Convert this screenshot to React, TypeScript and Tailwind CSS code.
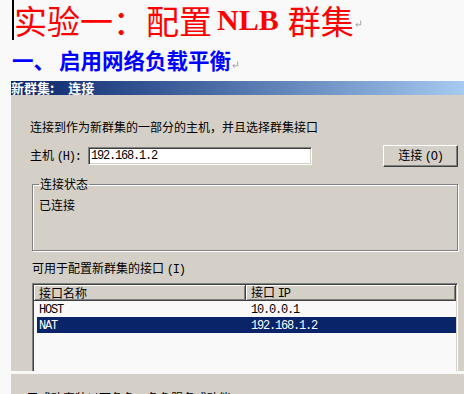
import type { ReactNode } from 'react';

const cjk = "font-['Noto_Sans_CJK_SC',sans-serif]";

function Lat({ children }: { children: ReactNode }) {
    return <span className="font-['Liberation_Mono',monospace] text-[12px] tracking-[-1.2px]">{children}</span>;
}

function ParaMark({ className }: { className: string }) {
    return (
        <svg viewBox="0 0 8 8" className={className} fill="none" stroke="#9a9a9a" strokeWidth="1">
            <path d="M6.5 0.5v5h-5.5M3 3.5l-2 2 2 2" />
        </svg>
    );
}

export default function App() {
    return (
        <div className={`h-[394px] w-[464px] overflow-hidden bg-[#f9f9f9] ${cjk}`}>
            {/* heading */}
            <div className="flex h-[40px] items-center pl-[12px]">
                <div className="h-[40px] w-[2px] self-start bg-black" />
                <div className="flex items-center text-[33px] leading-[40px] text-[#ff0000]">
                    <span>实验一：配置</span>
                    <span className="ml-[5px] mr-[9px] font-['Liberation_Serif',serif] text-[30px] font-bold">NLB</span>
                    <span>群集</span>
                </div>
                <ParaMark className="ml-[1px] mt-[6px] h-[7px] w-[7px]" />
            </div>

            <div className="mt-[4px] flex h-[32px] items-center pl-[12px] text-[21.5px] font-bold text-[#0000ff]">
                <span>一、</span>
                <span className="ml-[4px]">启用网络负载平衡</span>
                <ParaMark className="ml-[1px] mt-[8px] h-[7px] w-[7px]" />
            </div>

            {/* dialog */}
            <div className="ml-[11px] mt-[5px] text-[12px] leading-[16px] text-black">
                <div className="flex h-[14px] items-center bg-gradient-to-r from-[#0a246a] to-[#a6caf0] pr-[2px] text-[13px] font-bold text-white">
                    <span>新群集:</span>
                    <span className="ml-[14px]">连接</span>
                </div>
                <div className="h-[276px] overflow-hidden bg-[#d4d0c8] pl-[19px] pr-[6px]">
                    <div className="mt-[24px]">连接到作为新群集的一部分的主机，并且选择群集接口</div>

                    <div className="mt-[10px] flex h-[22px] items-center">
                        <span className="w-[58px]">
                            主机 <Lat>(H):</Lat>
                        </span>
                        <div className="flex h-[18px] w-[224px] items-center border border-b-white border-l-[#808080] border-r-white border-t-[#808080] bg-white pl-[2px] shadow-[inset_1px_1px_0_#404040,inset_-1px_-1px_0_#d4d0c8]">
                            <Lat>192.168.1.2</Lat>
                        </div>
                        <div className="ml-auto flex h-[22px] w-[75px] items-center justify-center border border-b-[#404040] border-l-white border-r-[#404040] border-t-white shadow-[inset_-1px_-1px_0_#808080]">
                            <span>
                                连接 <Lat>(O)</Lat>
                            </span>
                        </div>
                    </div>

                    <fieldset className="ml-[2px] mt-[9px] h-[75px] border border-[#808080] px-[6px] shadow-[1px_1px_0_#fff,inset_1px_1px_0_#fff]">
                        <legend className="px-[1px]">连接状态</legend>
                        <div className="mt-[5px]">已连接</div>
                    </fieldset>

                    <div className="ml-[2px] mt-[9px]">
                        可用于配置新群集的接口 <Lat>(I)</Lat>
                    </div>

                    <div className="ml-[2px] mt-[5px] h-[130px] border border-b-white border-l-[#808080] border-r-white border-t-[#808080] bg-[#f9f9f9] shadow-[inset_1px_1px_0_#404040,inset_-1px_-1px_0_#d4d0c8]">
                        <div className="ml-[1px] mr-[1px] mt-[1px] flex h-[16px]">
                            <div className="flex w-[212px] items-center border-b border-r border-b-[#404040] border-r-[#404040] bg-[#d4d0c8] pl-[5px] shadow-[inset_1px_1px_0_#fff,inset_-1px_-1px_0_#808080]">
                                <span>接口名称</span>
                            </div>
                            <div className="flex flex-1 items-center border-b border-r border-b-[#404040] border-r-[#404040] bg-[#d4d0c8] pl-[5px] shadow-[inset_1px_1px_0_#fff,inset_-1px_-1px_0_#808080]">
                                <span>
                                    接口 <Lat>IP</Lat>
                                </span>
                            </div>
                        </div>
                        <div className="ml-[4px] mr-[1px] flex h-[16px] items-center">
                            <div className="w-[209px] pl-[2px]">
                                <Lat>HOST</Lat>
                            </div>
                            <div className="pl-[5px]">
                                <Lat>10.0.0.1</Lat>
                            </div>
                        </div>
                        <div className="ml-[4px] mr-[1px] flex h-[16px] items-center bg-[#0a246a] text-white">
                            <div className="w-[209px] pl-[2px]">
                                <Lat>NAT</Lat>
                            </div>
                            <div className="pl-[5px]">
                                <Lat>192.168.1.2</Lat>
                            </div>
                        </div>
                    </div>
                </div>

                <div className="mt-[3px] h-[40px] bg-[#d4d0c8] pl-[16px] pt-[16px]">已成功安装以下角色、角色服务或功能:</div>
            </div>
        </div>
    );
}
